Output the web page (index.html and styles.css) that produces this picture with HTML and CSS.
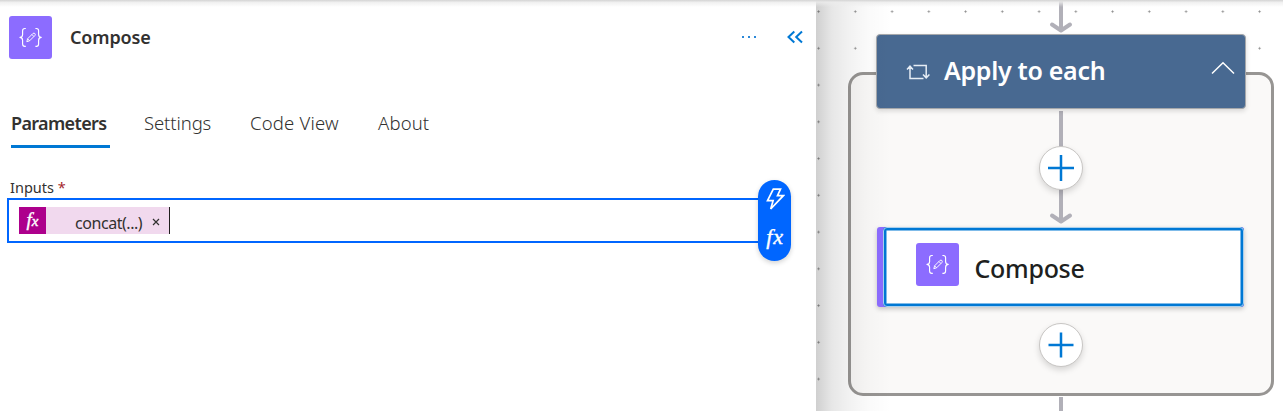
FILE: index.html
```html
<!DOCTYPE html>
<html lang="en">
<head>
<meta charset="utf-8">
<title>Compose</title>
<link rel="stylesheet" href="styles.css">
</head>
<body>
<svg class="defs" aria-hidden="true">
  <symbol id="compose" viewBox="0 0 43 43">
    <g fill="none" stroke="#fff" stroke-width="1.15" stroke-linejoin="round">
      <path d="M16.8 12.5h-1c-1.6 0-2.2.9-2.2 2.3v3.6c0 1.9-.8 2.9-2.6 3 1.8.1 2.6 1.1 2.6 3v3.600c0 1.400.6 2.300 2.200 2.300h1"/>
      <path d="M26.400 12.500h1c1.600 0 2.200.9 2.200 2.300v3.600c0 1.900.8 2.900 2.600 3-1.800.1-2.600 1.100-2.600 3v3.600c0 1.400-.6 2.300-2.200 2.300h-1"/>
      <path stroke-width=".95" d="M17.800 25.700l.8-2.900 5.300-5.300c1.400-1.200 3.200.6 2 2l-5.300 5.300zM22.900 18.500l2 2M18.600 22.800l2 2"/>
    </g>
  </symbol>
</svg>
<main class="designer">
  <section class="panel">
    <header class="panel-header">
      <svg class="op-icon"><use href="#compose"/></svg>
      <h1 class="panel-title">Compose</h1>
      <svg class="more" viewBox="0 0 18 4"><path d="M1 1h2v2H1zM7 1h2v2H7zM13 1h2v2h-2z"/></svg>
      <svg class="collapse" viewBox="0 0 18 14"><path d="M8.300 1.500 2.500 7l5.800 5.500M16 1.500 10.200 7l5.800 5.500"/></svg>
    </header>
    <nav class="tabs">
      <a class="tab tab-active">Parameters</a>
      <a class="tab tab-settings">Settings</a>
      <a class="tab tab-code">Code View</a>
      <a class="tab tab-about">About</a>
    </nav>
    <label class="label">Inputs <span class="required">*</span></label>
    <div class="editor">
      <span class="token">
        <span class="token-icon">f<small>x</small></span>
        <span class="token-text">concat(...)</span>
        <svg class="token-close" viewBox="0 0 8 8"><path d="M1 1l6 6M7 1 1 7"/></svg>
      </span>
      <div class="picker">
        <svg class="bolt" viewBox="0 0 20 24"><path d="M8.300 2.200h7.200l-3 6.500h5.800L5.700 22l2.400-8.300H2.500z"/></svg>
        <span class="fx">fx</span>
      </div>
    </div>
  </section>

  <section class="canvas">
    <div class="dots"></div>
    <div class="scope"></div>
    <svg class="edges" viewBox="0 0 467 411">
      <g fill="none" stroke="#b1b0b8" stroke-width="4">
        <path d="M245 0v29M245 111v108M245 397v14"/>
        <path stroke-linecap="round" stroke-linejoin="round" d="M236 24.500l9 6 9-6M236 215.500l9 6 9-6"/>
      </g>
    </svg>
    <div class="node-scope">
      <svg class="loop" viewBox="0 0 24 18"><path d="M4 3.500v12h13.500M1 6.500l3-3.300 3 3.300M7.500 2.500h12.700v12M17 11.500l3.200 3.300 3.200-3.300"/></svg>
      <span class="scope-title">Apply to each</span>
      <svg class="chevron" viewBox="0 0 24 14"><path d="M1 12.500 12 1.700l11 10.800"/></svg>
    </div>
    <button class="add add-first"><svg viewBox="0 0 26 26"><path d="M13 0v26M0 13h26"/></svg></button>
    <div class="node-action">
      <div class="action-card">
        <svg class="op-icon"><use href="#compose"/></svg>
        <span class="action-title">Compose</span>
      </div>
    </div>
    <button class="add add-last"><svg viewBox="0 0 26 26"><path d="M13 .5v25M.5 13h25"/></svg></button>
    <div class="panel-shade"></div>
  </section>
  <div class="top-shade"></div>
</main>
</body>
</html>
```
FILE: styles.css
```css
* { box-sizing: border-box; }
body {
  margin: 0;
  font-family: "Noto Sans", "Open Sans", sans-serif;
  color: #323130;
  background: #fff;
}
.defs { position: absolute; width: 0; height: 0; }
svg { display: block; flex: none; }
.designer { position: relative; display: flex; width: 1283px; height: 411px; overflow: hidden; }
.top-shade {
  position: absolute; inset: 0 0 auto; height: 7px;
  background: linear-gradient(#d7d7d7 0, #dcdcdc 1px, rgba(236,236,236,.85) 2px, rgba(255,255,255,0));
}

.panel { width: 816px; flex: none; padding: 16px 11px 0 7px; background: #fff; }
.panel-header { display: flex; align-items: center; height: 43px; padding-left: 2px; }
.op-icon { width: 43px; height: 43px; background: #8c6cff; border-radius: 3px; }
.panel-title { flex: none; margin: 0 0 2px 18px; width: 670px; font-size: 18px; line-height: 24px; font-weight: 600; letter-spacing: -.15px; white-space: nowrap; }
.more { width: 18px; height: 4px; margin: 0 0 1px 1px; fill: #2b88d8; }
.collapse { width: 18px; height: 14px; margin: 0 0 1px 27px; fill: none; stroke: #0078d4; stroke-width: 2; }

.tabs { display: flex; height: 48px; margin: 41px 0 0 4px; font-size: 18.500px; line-height: 46px; white-space: nowrap; }
.tab { height: 48px; font-weight: 300; color: #323130; }
.tab-active { width: 99px; font-size: 18px; letter-spacing: -.65px; font-weight: 600; border-bottom: 3px solid #0078d4; }
.tab-settings { margin-left: 34px; width: 106px; letter-spacing: -.1px; }
.tab-code { width: 128px; letter-spacing: .2px; }
.tab-about { letter-spacing: .15px; }

.label { display: block; margin: 29px 0 1px 3px; height: 20px; font-size: 14.500px; line-height: 20px; white-space: nowrap; }
.required { color: #a4262c; }
.editor { position: relative; display: flex; width: 760px; height: 45px; border: 2px solid #06f; padding: 7px 0 0 10px; }
.token { display: flex; width: 151px; height: 27px; background: #f1d9ee; border-right: 1px solid #201f1e; }
.token-icon { width: 27px; background: #ad008c; color: #fff; text-align: center; font: italic 19px/26px "Liberation Serif", serif; -webkit-text-stroke: .4px #fff; }
.token-icon small { font-size: 15px; }
.token-text { width: 68px; margin-left: 29px; font-size: 16px; line-height: 32px; letter-spacing: -.45px; white-space: nowrap; }
.token-close { width: 8px; height: 8px; margin: 11px 0 0 9px; fill: none; stroke: #323130; stroke-width: 1.200; }
.picker {
  position: absolute; left: 749px; top: -20px; width: 33px; height: 81px;
  display: flex; flex-direction: column; align-items: center; padding-top: 7px;
  border-radius: 17px; background: #06f; box-shadow: 0 2px 5px rgba(0,0,0,.18);
}
.bolt { width: 20px; height: 24px; fill: none; stroke: #fff; stroke-width: 1.700; }
.fx { margin: 14px 0 0 1px; color: #fff; font: italic 22px/24px "Liberation Serif", serif; letter-spacing: .8px; -webkit-text-stroke: .4px #fff; }

.canvas { position: relative; flex: 1; background: #fff; }
.canvas > * { position: absolute; }
.dots {
  inset: 0;
  background-image: radial-gradient(circle, #8c8c8c 0, #999 .8px, transparent 1.400px);
  background-size: 36.750px 36.750px;
  background-position: -15.800px -6.800px;
}
.scope { left: 32px; top: 72px; width: 426px; height: 324px; background: #faf9f8; border: 3px solid #979593; border-radius: 15px; }
.edges { left: 0; top: 0; width: 467px; height: 411px; }
.node-scope {
  left: 60px; top: 34px; width: 370px; height: 75px; display: flex; align-items: center;
  padding-left: 29px; background: #486991; border: 1.500px solid #a6a8ab; border-radius: 4px;
  box-shadow: 0 2px 5px rgba(0,0,0,.14);
}
.loop { width: 24px; height: 18px; fill: none; stroke: #e6edf5; stroke-width: 1.500; }
.scope-title { width: 268px; margin: 0 0 3px 14px; font-size: 25px; line-height: 34px; font-weight: 600; letter-spacing: -.3px; color: #fff; white-space: nowrap; }
.chevron { width: 24px; height: 14px; margin: 0 0 7px -1px; fill: none; stroke: #fff; stroke-width: 1.500; }
.add {
  left: 223px; width: 44px; height: 44px; padding: 0; display: grid; place-items: center;
  background: #fff; border: 1.500px solid #c8c6c4; border-radius: 50%; box-shadow: 0 3px 6px rgba(0,0,0,.15);
}
.add svg { width: 26px; height: 26px; stroke: #0078d4; stroke-width: 2.500; }
.add-first { top: 146px; }
.add-last { top: 323px; }
.node-action {
  left: 61px; top: 227px; width: 367px; height: 80px; padding-left: 6px;
  background: #8c6cff; border-radius: 3px; box-shadow: 0 2px 5px rgba(0,0,0,.22);
}
.action-card {
  position: relative; display: flex; align-items: center; height: 80px; padding: 0 0 5px 29px;
  background: #fff; border: 3.500px solid #0078d4; border-radius: 4px; box-shadow: inset 0 0 0 .5px #0078d4;
  border-width: 3px; outline: 1px solid #a9d0ee; outline-offset: -1px;
}
.action-card .op-icon { margin-left: .5px; }
.action-title { margin: 6px 0 0 16px; font-size: 25px; line-height: 34px; font-weight: 500; letter-spacing: -.3px; color: #201f1e; white-space: nowrap; }
.panel-shade {
  left: 0; top: 0; width: 75px; height: 411px;
  background: linear-gradient(90deg, rgba(0,0,0,.19), rgba(0,0,0,.095) 16px, rgba(0,0,0,.055) 32px, rgba(0,0,0,.02) 52px, transparent);
}
```
